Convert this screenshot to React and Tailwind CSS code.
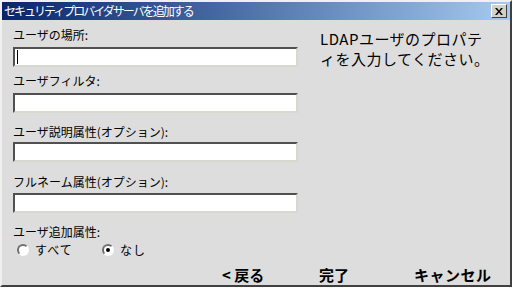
import { useState } from 'react'

const font = { fontFamily: '"Noto Sans CJK JP", "Liberation Sans", sans-serif' }

function Field({ label, caret, top, gap }) {
  return (
    <div className={top}>
      <div className="h-[14px] text-[12px] leading-[14px] text-black">{label}</div>
      <div className={`${gap} h-[20px] w-[285px] border-2 border-t-[#505050] border-l-[#505050] border-b-[#d8d8d0] border-r-[#d8d8d0] bg-white relative`}>
        {caret && <div className="absolute left-[2px] top-[1px] h-[14px] w-px bg-black" />}
      </div>
    </div>
  )
}

function Radio({ checked, label, onClick }) {
  return (
    <button onClick={onClick} className="flex items-center gap-[6px] text-[12px] leading-[14px] tracking-[1px]">
      <span className="flex h-[12px] w-[12px] items-center justify-center rounded-full border-2 border-t-[#707070] border-l-[#707070] border-b-white border-r-white bg-white">
        {checked && <span className="h-[4px] w-[4px] rounded-full bg-black" />}
      </span>
      <span>{label}</span>
    </button>
  )
}

export default function App() {
  const [all, setAll] = useState(false)

  return (
    <div style={font} className="w-[512px] h-[288px] bg-white">
      <div className="flex h-[287px] w-[512px] flex-col border-l-2 border-t-2 border-l-[#f0f0f0] border-t-[#f0f0f0] border-r-2 border-b-2 border-r-[#404040] border-b-[#404040] bg-[#dddddd]">
        {/* title bar */}
        <div className="flex h-[18px] items-center justify-between bg-gradient-to-r from-[#0a246a] to-[#a6caf0] pl-[2px] pr-[3px]">
          <span className="text-[12px] leading-[14px] tracking-[-2px] text-white">セキュリティプロバイダサーバを追加する</span>
          <button className="flex h-[14px] w-[16px] items-center justify-center border border-t-white border-l-white border-b-[#404040] border-r-[#404040] bg-[#d4d0c8]">
            <svg width="8" height="7" viewBox="0 0 8 7">
              <path d="M0 0h2l2 2.5L6 0h2L5 3.5 8 7H6L4 4.5 2 7H0l3-3.5z" fill="#000" />
            </svg>
          </button>
        </div>

        <div className="flex flex-1">
          <div className="pl-[11px] pt-[8px]">
            <Field label="ユーザの場所:" caret top="" gap="mt-[5px]" />
            <Field label="ユーザフィルタ:" top="mt-[7px]" gap="mt-[5px]" />
            <Field label="ユーザ説明属性(オプション):" top="mt-[12px]" gap="mt-[3px]" />
            <Field label="フルネーム属性(オプション):" top="mt-[13px]" gap="mt-[4px]" />
            <div className="mt-[12px] h-[14px] text-[12px] leading-[14px]">ユーザ追加属性:</div>
            <div className="mt-[4px] flex pl-[4px]">
              <div className="w-[85px]">
                <Radio checked={all} label="すべて" onClick={() => setAll(true)} />
              </div>
              <Radio checked={!all} label="なし" onClick={() => setAll(false)} />
            </div>
          </div>
          <div className="pl-[22px] pt-[9px]">
            <p className="whitespace-nowrap text-[15px] leading-[20px] tracking-[0.5px] text-black">
              LDAPユーザのプロパテ<br />ィを入力してください。
            </p>
          </div>
        </div>

        <div className="flex h-[26px] items-center pl-[220px] pt-[5px] text-[15px] font-bold leading-[16px]">
          <button className="w-[97px] text-left">&lt;&nbsp;戻る</button>
          <button className="w-[95px] text-left">完了</button>
          <button className="text-left tracking-[0.5px]">キャンセル</button>
        </div>
      </div>
    </div>
  )
}
